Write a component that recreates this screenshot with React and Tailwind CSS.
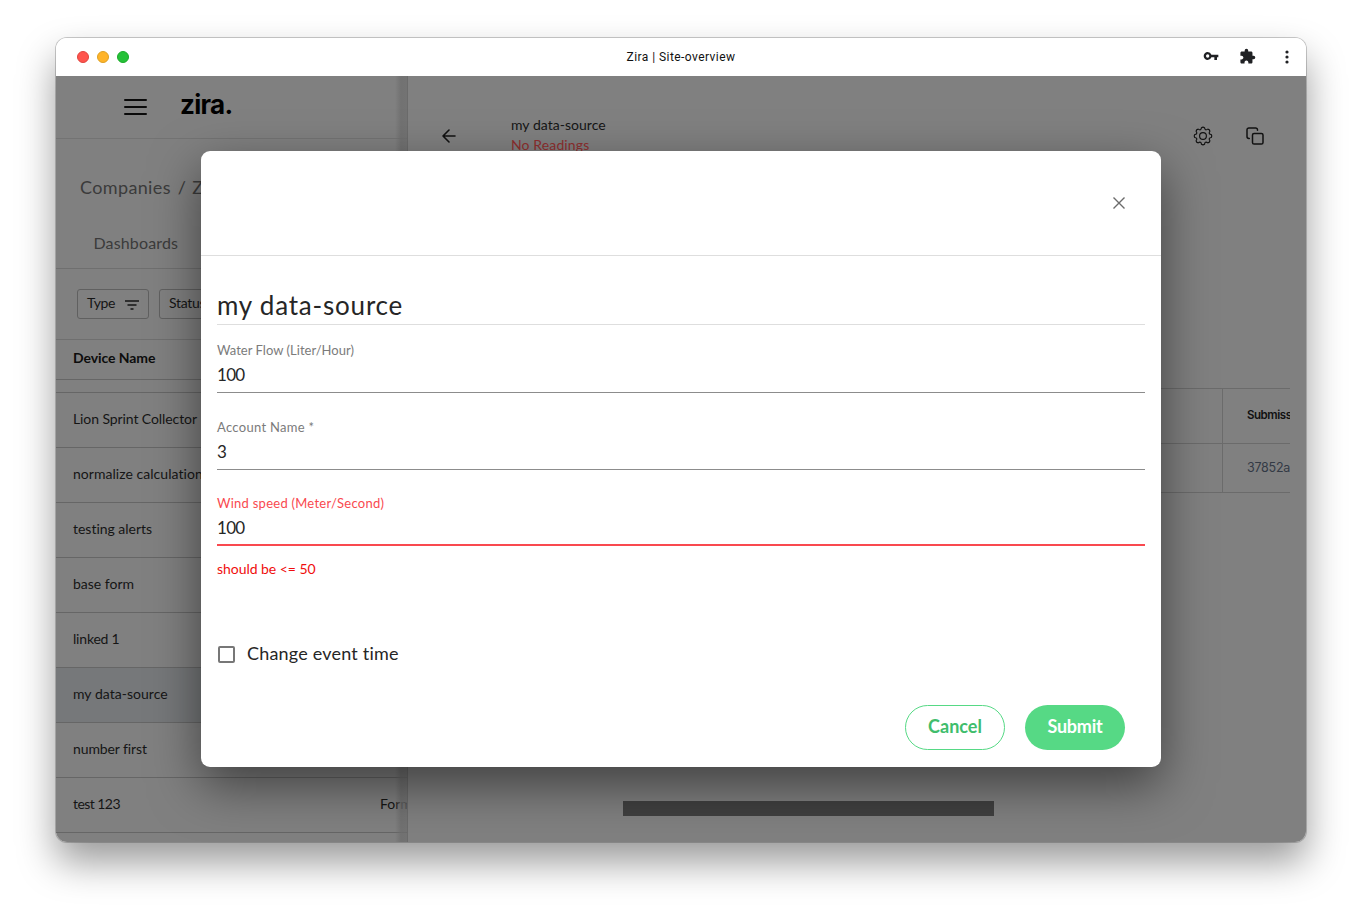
import React from "react";

const devices = [
  { name: "Lion Sprint Collector", tracking: "tracking-[-0.09px]" },
  { name: "normalize calculation", tracking: "tracking-[0.04px]" },
  { name: "testing alerts", tracking: "tracking-[-0.02px]" },
  { name: "base form", tracking: "tracking-[0px]" },
  { name: "linked 1", tracking: "tracking-[-0.2px]" },
  { name: "my data-source", tracking: "tracking-[0.03px]", selected: true },
  { name: "number first", tracking: "tracking-[-0.1px]" },
  { name: "test 123", tracking: "tracking-[-0.55px]", type: "Form" },
];

function KeyIcon() {
  return (
    <svg width="16" height="16" viewBox="0 0 24 24" fill="#202124">
      <path d="M12.650 10A5.990 5.990 0 0 0 7 6c-3.310 0-6 2.690-6 6s2.690 6 6 6a5.990 5.990 0 0 0 5.650-4H17v4h4v-4h2v-4H12.650zM7 14.500a2.500 2.500 0 1 1 0-5 2.500 2.500 0 0 1 0 5z" />
    </svg>
  );
}

function PuzzleIcon() {
  return (
    <svg width="17" height="17" viewBox="0 0 24 24" fill="#202124">
      <path d="M20.500 11H19V7c0-1.100-.900-2-2-2h-4V3.500a2.500 2.500 0 0 0-5 0V5H4c-1.100 0-1.990.900-1.990 2v3.800H3.500c1.490 0 2.700 1.210 2.700 2.700s-1.210 2.700-2.700 2.700H2V20c0 1.100.900 2 2 2h3.800v-1.500c0-1.490 1.210-2.700 2.700-2.700s2.700 1.210 2.700 2.700V22H17c1.100 0 2-.900 2-2v-4h1.500a2.500 2.500 0 0 0 0-5z" />
    </svg>
  );
}

function GearIcon() {
  return (
    <svg width="20" height="20" viewBox="0 0 20 20" fill="none" stroke="#111" strokeWidth="1.150" strokeLinejoin="round">
      <path d="M8.500 1.700Q10 .700 11.500 1.700C11.800 3.900 12.900 4.400 14.800 3.100Q16.600 3.400 16.900 5.200C15.600 7.100 16.100 8.200 18.300 8.500Q19.300 10 18.300 11.500C16.100 11.800 15.600 12.900 16.900 14.800Q16.600 16.600 14.800 16.900C12.900 15.600 11.800 16.100 11.500 18.300Q10 19.300 8.500 18.300C8.200 16.100 7.100 15.600 5.200 16.900Q3.400 16.600 3.100 14.800C4.400 12.900 3.900 11.800 1.700 11.500Q.700 10 1.700 8.500C3.900 8.200 4.400 7.100 3.100 5.200Q3.400 3.400 5.200 3.100C7.100 4.400 8.200 3.900 8.500 1.700z" />
      <circle cx="10" cy="10" r="3.400" />
    </svg>
  );
}

function CopyIcon() {
  return (
    <svg width="18" height="18" viewBox="0 0 18 18" fill="none" stroke="#111" strokeWidth="1.500" strokeLinecap="round" strokeLinejoin="round">
      <rect x="6.500" y="6.500" width="10.500" height="10.500" rx="1.600" />
      <path d="M3.300 11.500h-.4A1.900 1.900 0 0 1 1 9.600V2.900A1.900 1.900 0 0 1 2.900 1h6.700a1.900 1.900 0 0 1 1.900 1.900v.4" />
    </svg>
  );
}

function Sidebar() {
  return (
    <aside className="relative flex w-[352px] shrink-0 flex-col overflow-hidden border-r border-[#6b6b6b]">
      <div className="flex h-[63px] shrink-0 items-start border-b border-[#737373] pl-[68px]">
        <svg className="mt-[22px]" width="23" height="18" viewBox="0 0 23 18" stroke="#0a0a0a" strokeWidth="2" strokeLinecap="round">
          <path d="M1 2h21M1 9h21M1 16h21" />
        </svg>
        <span className="ml-[33px] mt-[13px] font-['Inter',sans-serif] text-[26px] font-bold leading-[32px] tracking-[-0.7px] text-black">zira.</span>
      </div>
      <div className="flex h-[96px] shrink-0 items-center whitespace-pre pl-6 text-[18px] tracking-[0.36px] text-[#3b3b3b]">
        <span>Companies</span><span className="ml-[7px]">/</span><span className="ml-[6px]">Zira</span>
      </div>
      <div className="flex h-[34px] shrink-0 items-start border-b border-[#6f6f6f] pl-[37.500px] text-[16px] leading-[16px] tracking-[0.15px] text-[#3b3b3b]">
        Dashboards
      </div>
      <div className="flex h-[71px] shrink-0 items-center gap-[10px] border-b border-[#6f6f6f] pl-[21px] text-[14px] text-[#151515]">
        <button className="flex h-[30px] w-[72px] items-center justify-between rounded-[3px] border border-[#606060] pl-[9px] pr-[9px]">
          <span className="pb-[3px] tracking-[-0.4px]">Type</span>
          <svg className="mt-[2px]" width="14" height="10" viewBox="0 0 14 10" stroke="#151515" strokeWidth="1.600">
            <path d="M0 1h14M2.500 5h9M5.500 9h3" />
          </svg>
        </button>
        <button className="flex h-[30px] w-[86px] items-center rounded-[3px] border border-[#606060] pb-[3px] pl-[9px] tracking-[-0.3px]">Status</button>
      </div>
      <div className="flex h-[40px] shrink-0 items-center border-b border-[#666] pb-[4px] pl-[17px] text-[14px] font-bold tracking-[-0.08px] text-[#0d0d0d]">
        Device Name
      </div>
      <div className="h-[13px] shrink-0 border-b border-[#666]" />
      {devices.map(({ name, tracking, selected, type }) => (
        <div
          key={name}
          className={`flex h-[55px] shrink-0 items-center whitespace-nowrap border-b border-[#666] pb-[3px] pl-[17px] text-[14px] text-[#151515] ${
            selected ? "bg-[#76787a]" : ""
          }`}
        >
          <span className={`w-[307px] shrink-0 ${tracking}`}>{name}</span>
          {type && <span>{type}</span>}
        </div>
      ))}
      <div className="absolute inset-y-0 right-0 w-[12px] bg-gradient-to-r from-transparent via-[#6e6e6e]/80 to-[#6e6e6e]/70" />
    </aside>
  );
}

function Detail() {
  return (
    <main className="flex min-w-0 flex-1 flex-col">
      <div className="flex h-[120px] shrink-0 items-start pl-[34px] pr-[42px] pt-[39px]">
        <svg className="mt-[14px]" width="14" height="14" viewBox="0 0 14 14" fill="none" stroke="#111" strokeWidth="1.600" strokeLinecap="round" strokeLinejoin="round">
          <path d="M13 7H1M7 1 1 7l6 6" />
        </svg>
        <div className="ml-[55px] flex-1 text-[14px] leading-[20px]">
          <p className="tracking-[0.03px] text-[#151515]">my data-source</p>
          <p className="tracking-[0.12px] text-[#8f2f2f]">No Readings</p>
        </div>
        <div className="mt-[11px] flex items-center gap-[33px]">
          <GearIcon />
          <CopyIcon />
        </div>
      </div>
      <div className="ml-4 mr-4 mt-[192px] grid shrink-0 grid-cols-[799px_1fr] overflow-hidden border-t border-[#6b6b6b] font-['Inter',sans-serif]">
        <div className="h-[55px] border-b border-r border-[#6b6b6b]" />
        <div className="flex h-[55px] items-center border-b border-[#6b6b6b] pl-[24px] text-[11.500px] font-semibold tracking-[-0.45px] text-[#111]">Submiss</div>
        <div className="h-[49px] border-b border-r border-[#6b6b6b]" />
        <div className="flex h-[49px] items-center border-b border-[#6b6b6b] pl-[24px] text-[12.500px] tracking-[-0.25px] text-[#333a45]">37852a</div>
      </div>
      <div className="ml-[215px] mt-[308px] h-[15px] w-[371px] shrink-0 bg-[#404040]" />
    </main>
  );
}

function Field({ label, value, error, tracking }) {
  return (
    <label className={`flex h-[53px] flex-col ${error ? "border-b-2 border-[#f9494f]" : "border-b border-[#8c8c8c]"}`}>
      <span className={`text-[13px] leading-[20px] ${tracking} ${error ? "text-[#f9494f]" : "text-[#7b7b7b]"}`}>{label}</span>
      <span className="mt-[4px] text-[17px] leading-[22px] tracking-[-0.7px] text-[#262626]">{value}</span>
    </label>
  );
}

function Modal() {
  return (
    <div className="absolute left-[145px] top-[113px] flex h-[616px] w-[960px] flex-col rounded-[9px] bg-white shadow-[0_18px_50px_rgba(0,0,0,0.5)]">
      <div className="flex h-[105px] shrink-0 items-center justify-end border-b border-[#dedede] pr-[36px]">
        <svg width="12" height="12" viewBox="0 0 12 12" stroke="#6b6b6b" strokeWidth="1.400">
          <path d="m.5.500 11 11M11.500.500l-11 11" />
        </svg>
      </div>
      <div className="flex flex-1 flex-col px-4 pt-[30px]">
        <h1 className="h-[39px] border-b border-[#dedede] text-[26px] leading-[38px] tracking-[0.79px] text-[#262626]">my data-source</h1>
        <div className="mt-[15px]"><Field label="Water Flow (Liter/Hour)" value="100" tracking="tracking-[0.03px]" /></div>
        <div className="mt-[24px]"><Field label="Account Name *" value="3" tracking="tracking-[0.3px]" /></div>
        <div className="mt-[23px]"><Field label="Wind speed (Meter/Second)" value="100" tracking="tracking-[0.260px]" error /></div>
        <p className="mt-[13px] text-[14px] leading-[20px] tracking-[-0.04px] text-[#f00d0d]">should be &lt;= 50</p>
        <div className="mt-[62px] flex items-center gap-[12px] pl-px">
          <span className="mt-[2px] size-[17px] rounded-[2px] border-2 border-[#777]" />
          <span className="text-[18px] leading-[24px] tracking-[0.2px] text-[#262626]">Change event time</span>
        </div>
        <div className="mt-[40px] flex justify-end gap-5 pr-5 text-[18px] font-bold">
          <button className="h-[45px] w-[100px] rounded-[23px] border border-[#56d985] pb-[2px] text-[#40bd6c]">Cancel</button>
          <button className="h-[45px] w-[100px] rounded-[23px] bg-[#56d985] pb-[2px] tracking-[-0.2px] text-white">Submit</button>
        </div>
      </div>
    </div>
  );
}

export default function App() {
  return (
    <div className="h-[916px] w-[1362px] overflow-hidden bg-white px-[56px] pt-[38px] font-['Lato',sans-serif]">
      <div className="relative flex h-[804px] w-[1250px] flex-col rounded-[11px] shadow-[0_0_0_1px_rgba(0,0,0,0.2),0_20px_38px_rgba(0,0,0,0.4)]">
        <header className="flex h-[38px] shrink-0 items-center rounded-t-[11px] bg-white px-[21px]">
          <div className="flex w-[200px] gap-2">
            <span className="size-3 rounded-full border border-[#e0443e] bg-[#ff544d]" />
            <span className="size-3 rounded-full border border-[#dea123] bg-[#ffb429]" />
            <span className="size-3 rounded-full border border-[#1aab29] bg-[#25c138]" />
          </div>
          <div className="flex-1 text-center font-['Roboto',sans-serif] text-[12px] tracking-[0.44px] text-[#111]">Zira | Site-overview</div>
          <div className="flex w-[200px] items-center justify-end">
            <span className="-mt-[2px]"><KeyIcon /></span>
            <span className="-mt-px ml-[20px]"><PuzzleIcon /></span>
            <svg className="-mr-[4px] ml-[29px]" width="4" height="14" viewBox="0 0 4 14" fill="#202124">
              <circle cx="2" cy="2" r="1.600" /><circle cx="2" cy="7" r="1.600" /><circle cx="2" cy="12" r="1.600" />
            </svg>
          </div>
        </header>
        <div className="flex h-[766px] overflow-hidden rounded-b-[11px] bg-[#808080]">
          <Sidebar />
          <Detail />
        </div>
        <Modal />
      </div>
    </div>
  );
}
